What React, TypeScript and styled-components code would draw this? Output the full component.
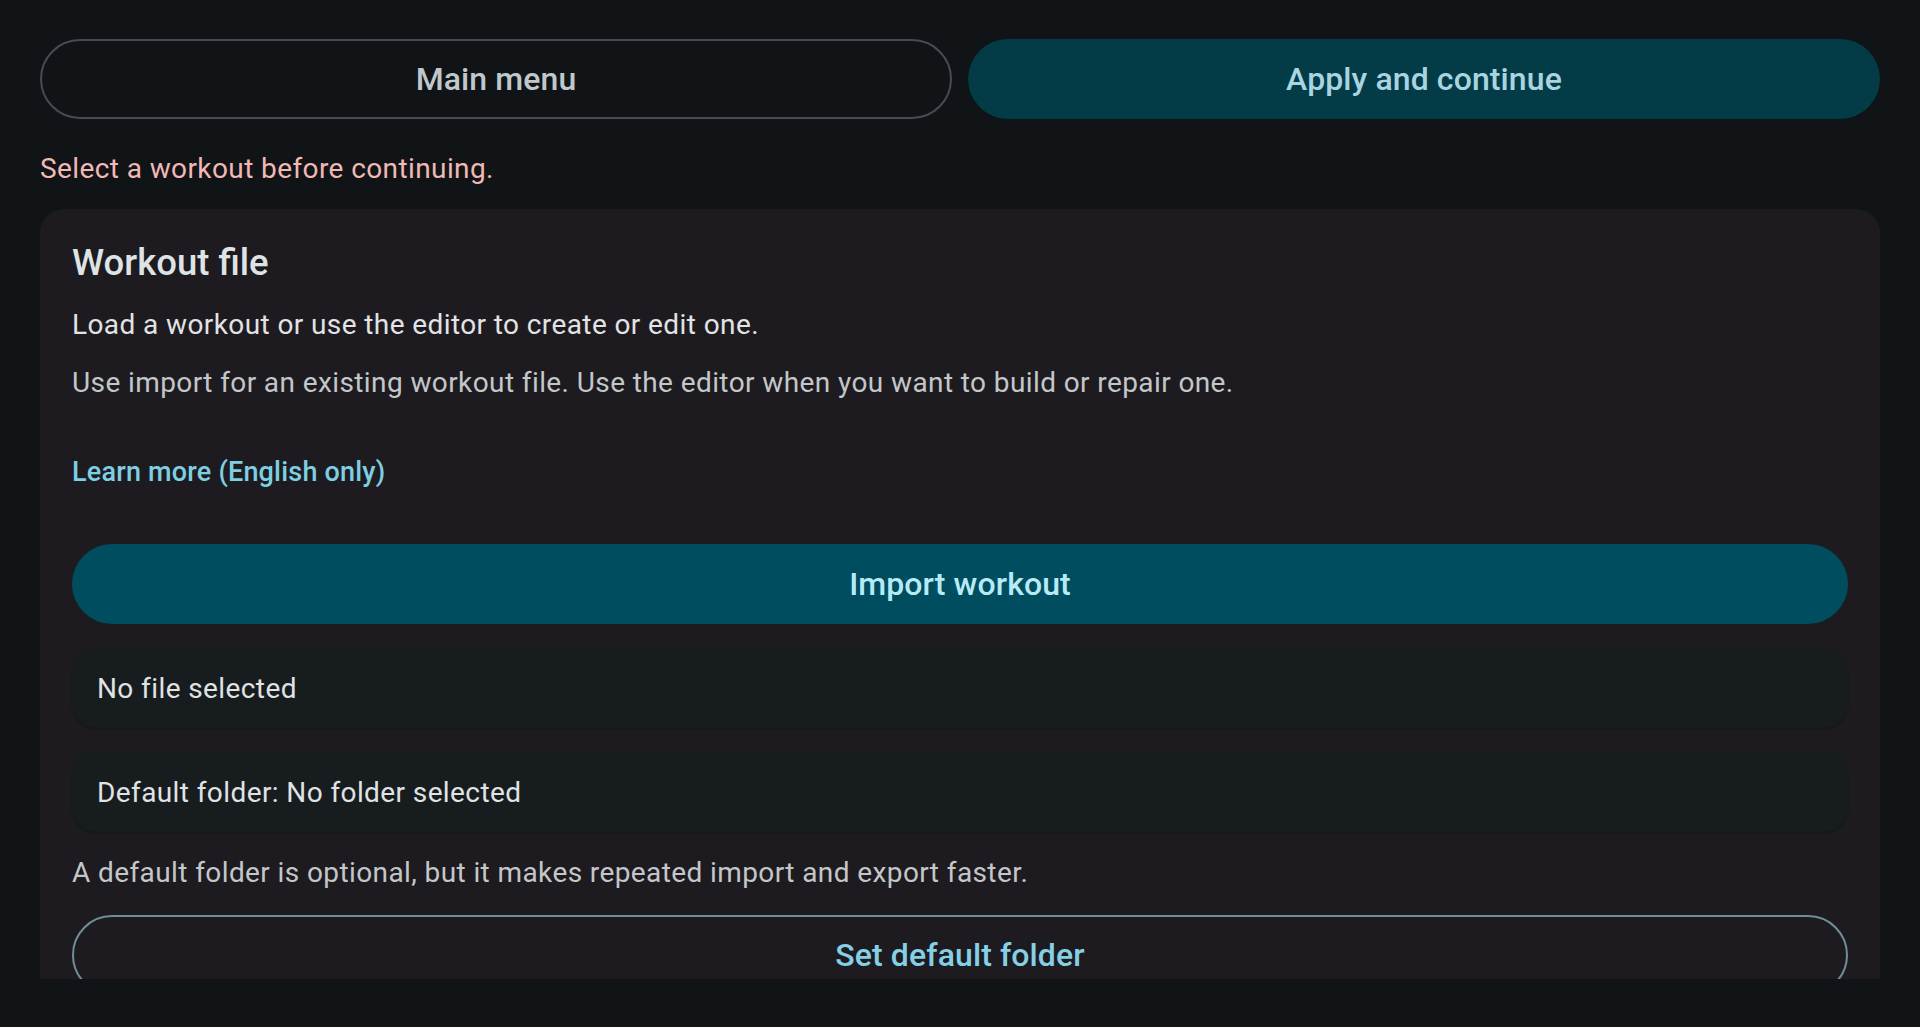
import React from "react";
import styled, { createGlobalStyle, css } from "styled-components";

const GlobalStyle = createGlobalStyle`
  html, body {
    margin: 0;
    padding: 0;
    background: #101417;
  }
  body {
    font-family: Roboto, "Noto Sans", "Liberation Sans", sans-serif;
    -webkit-font-smoothing: antialiased;
  }
  * { box-sizing: border-box; }
`;

const Page = styled.div`
  height: 100vh;
  display: flex;
  flex-direction: column;
  padding: 39px 40px 48px;
  background: #101417;
  overflow: hidden;
`;

const TopBar = styled.div`
  display: grid;
  grid-template-columns: 1fr 1fr;
  gap: 16px;
  flex-shrink: 0;
`;

type Variant = "outlined" | "tonal" | "filled" | "accentOutline";

const PillButton = styled.button<{ $variant: Variant }>`
  height: 80px;
  width: 100%;
  border-radius: 40px;
  display: flex;
  align-items: center;
  justify-content: center;
  font-family: Roboto, "Liberation Sans", sans-serif;
  font-size: 32px;
  font-weight: 500;
  letter-spacing: 0.1px;
  cursor: pointer;
  border: 2px solid transparent;
  flex-shrink: 0;

  ${({ $variant }) =>
    $variant === "outlined" &&
    css`
      background: transparent;
      border-color: #4a4a50;
      color: #bfc8ca;
    `}
  ${({ $variant }) =>
    $variant === "tonal" &&
    css`
      background: #033b47;
      color: #a8d5e0;
    `}
  ${({ $variant }) =>
    $variant === "filled" &&
    css`
      background: #004d5f;
      color: #b6ebf6;
    `}
  ${({ $variant }) =>
    $variant === "accentOutline" &&
    css`
      background: transparent;
      border-color: #6f8e99;
      color: #85d0e4;
    `}
`;

const ErrorText = styled.p`
  margin: 29px 0 0;
  font-size: 28px;
  line-height: 42px;
  letter-spacing: 0.4px;
  color: #f2b8b5;
  flex-shrink: 0;
`;

const ScrollArea = styled.div`
  flex: 1;
  min-height: 0;
  margin-top: 19px;
  overflow: hidden;
`;

const Card = styled.section`
  background: #1d1b20;
  border-radius: 24px;
  padding: 29px 32px 32px;
  display: flex;
  flex-direction: column;
`;

const Title = styled.h2`
  margin: 0;
  font-size: 36.5px;
  line-height: 49px;
  font-weight: 500;
  color: #dee3e5;
`;

const BodyText = styled.p<{ $muted?: boolean; $gap: number }>`
  margin: ${({ $gap }) => $gap}px 0 0;
  font-size: 28px;
  line-height: 42px;
  letter-spacing: 0.4px;
  color: ${({ $muted }) => ($muted ? "#c3c7c9" : "#e1e3e4")};
`;

const LinkText = styled.a`
  display: block;
  align-self: flex-start;
  margin-top: 26px;
  height: 84px;
  line-height: 84px;
  font-size: 27px;
  font-weight: 500;
  letter-spacing: 0.2px;
  color: #7fcfe3;
  text-decoration: none;
  cursor: pointer;
`;

const Spaced = styled.div<{ $gap: number }>`
  margin-top: ${({ $gap }) => $gap}px;
`;

const InfoRow = styled.div`
  height: 80px;
  display: flex;
  align-items: center;
  padding: 0 25px;
  border-radius: 24px;
  background: #171c1f;
  box-shadow: 0 1px 2px rgba(0, 0, 0, 0.25);
  font-size: 28px;
  letter-spacing: 0.4px;
  color: #e0e3e4;
`;

export default function App() {
  return (
    <>
      <GlobalStyle />
      <Page>
        <TopBar>
          <PillButton $variant="outlined">Main menu</PillButton>
          <PillButton $variant="tonal">Apply and continue</PillButton>
        </TopBar>
        <ErrorText>Select a workout before continuing.</ErrorText>
        <ScrollArea>
          <Card>
            <Title>Workout file</Title>
            <BodyText $gap={17}>
              Load a workout or use the editor to create or edit one.
            </BodyText>
            <BodyText $gap={16} $muted>
              Use import for an existing workout file. Use the editor when you
              want to build or repair one.
            </BodyText>
            <LinkText>Learn more (English only)</LinkText>
            <Spaced $gap={30}>
              <PillButton $variant="filled">Import workout</PillButton>
            </Spaced>
            <Spaced $gap={24}>
              <InfoRow>No file selected</InfoRow>
            </Spaced>
            <Spaced $gap={24}>
              <InfoRow>Default folder: No folder selected</InfoRow>
            </Spaced>
            <BodyText $gap={20} $muted>
              A default folder is optional, but it makes repeated import and
              export faster.
            </BodyText>
            <Spaced $gap={21}>
              <PillButton $variant="accentOutline">Set default folder</PillButton>
            </Spaced>
          </Card>
        </ScrollArea>
      </Page>
    </>
  );
}
